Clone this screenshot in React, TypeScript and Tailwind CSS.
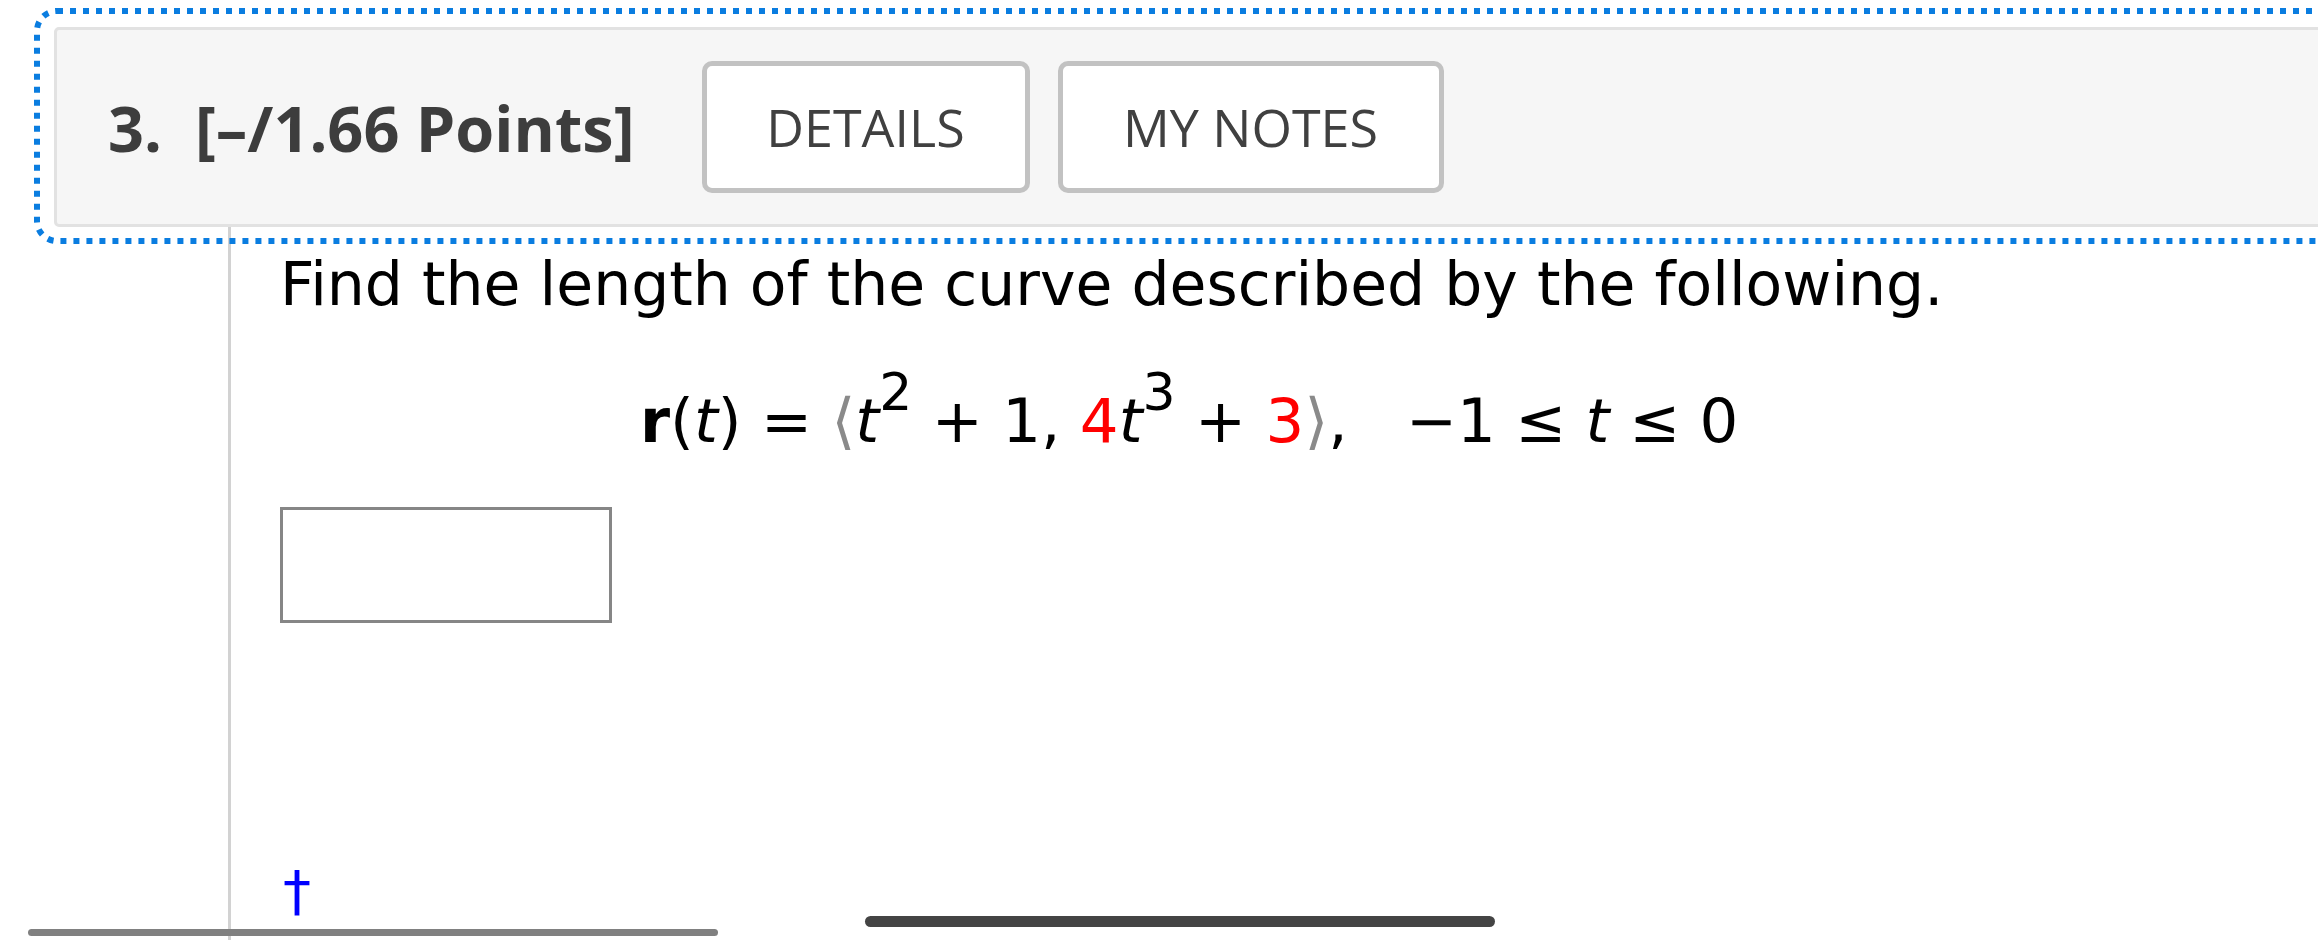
import React from 'react';

const DottedFocus: React.FC = () => (
  <svg
    className="absolute left-[34px] top-[8px] pointer-events-none"
    width={2340}
    height={236}
    viewBox="0 0 2340 236"
  >
    <rect
      x={3}
      y={3}
      width={2330}
      height={230}
      rx={20}
      fill="none"
      stroke="#0a7de0"
      strokeWidth={6}
      strokeDasharray="6 7"
    />
  </svg>
);

const HeaderButton: React.FC<{ label: string; width: string }> = ({ label, width }) => (
  <button
    className={`${width} h-[132px] bg-white border-[5px] border-[#c2c2c2] rounded-[10px] flex items-center justify-center text-[52px] text-[#404040] font-['Open_Sans',sans-serif]`}
  >
    {label}
  </button>
);

const App: React.FC = () => {
  return (
    <div className="relative w-[2318px] h-[940px] overflow-hidden bg-white">
      {/* Question header */}
      <div className="pl-[54px] pt-[27px]">
        <div className="w-[2300px] h-[200px] bg-[#f6f6f6] border-[3px] border-[#e2e2e2] rounded-[5px] flex items-center pl-[51px]">
          <h2 className="text-[63px] font-bold text-[#3d3d3d] font-['Open_Sans',sans-serif] leading-none flex items-center">
            <span>3.</span>
            <span className="ml-[33px]">[–/1.66 Points]</span>
          </h2>
          <div className="flex items-center gap-[28px] ml-[67px]">
            <HeaderButton label="DETAILS" width="w-[328px]" />
            <HeaderButton label="MY NOTES" width="w-[386px]" />
          </div>
        </div>
      </div>
      <DottedFocus />

      {/* Question body */}
      <div className="flex h-[713px]">
        <div className="w-[231px] shrink-0 border-r-[3px] border-[#d2d2d2]" />
        <div className="pl-[49px] pt-[22px] text-black font-['DejaVu_Sans',Verdana,sans-serif]">
          <p className="text-[60px] leading-[70px]">
            Find the length of the curve described by the following.
          </p>
          <p className="mt-[67px] pl-[360px] text-[61px] leading-[70px] whitespace-nowrap">
            <span className="font-bold">r</span>(<i>t</i>) = <span className="text-[#8a8a8a]">⟨</span><i>t</i><sup className="text-[52px] -top-[32px]">2</sup> + 1, <span className="text-[#ff0000]">4</span><i>t</i><sup className="text-[52px] -top-[32px]">3</sup> + <span className="text-[#ff0000]">3</span><span className="text-[#8a8a8a]">⟩</span>,&nbsp;&nbsp; −1 ≤ <i>t</i> ≤ 0
          </p>
          <div className="mt-[51px] w-[332px] h-[116px] border-[3px] border-[#868686] bg-white" />
          <div className="mt-[240px] pl-[3px] text-[56px] leading-none text-[#0000ff]">†</div>
        </div>
      </div>

      {/* Scroll indicators */}
      <div className="absolute left-[28px] top-[929px] w-[690px] h-[7px] rounded-full bg-[#808080]" />
      <div className="absolute left-[865px] top-[916px] w-[630px] h-[11px] rounded-full bg-[#444444]" />
    </div>
  );
};

export default App;
